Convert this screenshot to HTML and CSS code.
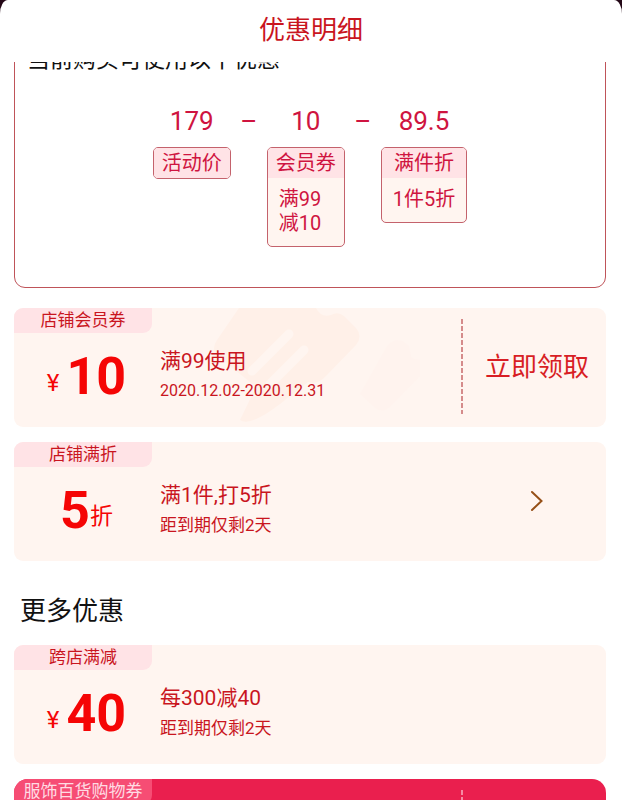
FILE: index.html
```html
<!doctype html>
<html lang="zh-CN">
  <head>
    <meta charset="utf-8">
    <meta name="viewport" content="width=device-width, initial-scale=1">
    <title>优惠明细</title>
    <link rel="stylesheet" href="styles.css">
  </head>
  <body>
    <div class="sheet">
      <header class="header"><h1>优惠明细</h1></header>
      <main class="content">
        <section class="panel">
          <h2 class="panel-title">当前购买可使用以下优惠</h2>
          <div class="formula">
            <div class="term">
              <span class="num">179</span>
              <div class="chip"><div class="chip-head">活动价</div></div>
            </div>
            <span class="minus">–</span>
            <div class="term">
              <span class="num">10</span>
              <div class="chip">
                <div class="chip-head">会员券</div>
                <div class="chip-body">满99<br>减10</div>
              </div>
            </div>
            <span class="minus">–</span>
            <div class="term">
              <span class="num">89.5</span>
              <div class="chip">
                <div class="chip-head">满件折</div>
                <div class="chip-body">1件5折</div>
              </div>
            </div>
          </div>
        </section>

        <article class="card">
          <!-- faint tickets behind the text -->
          <svg class="watermark" viewBox="0 0 230 119" aria-hidden="true">
            <path fill="#fff0e8" d="M49 0H126Q131 10 141 7Q148 3 154 8L166 20Q173 28 166 37L136 68Q128 77 118 74L90 96Q60 119 50 112L66 79L29 49Q20 42 27 32Z"/>
            <path stroke="#fff5f0" stroke-width="9" stroke-linecap="round" d="M99 26L62 63M114 42L80 76"/>
            <path fill="#fff3ee" d="M197 38Q207 26 219 38L221 49Q226 54 236 50L240 58L202 97Q192 107 184 99L170 86Z"/>
          </svg>
          <div class="tag">店铺会员券</div>
          <div class="value"><span class="unit">¥</span><b>10</b></div>
          <div class="info">
            <h3>满99使用</h3>
            <p class="date">2020.12.02-2020.12.31</p>
          </div>
          <div class="action dashed"><button type="button">立即领取</button></div>
        </article>

        <article class="card">
          <div class="tag">店铺满折</div>
          <div class="value off"><b>5</b><span class="unit">折</span></div>
          <div class="info">
            <h3>满1件,打5折</h3>
            <p>距到期仅剩2天</p>
          </div>
          <div class="action">
            <button type="button" aria-label="查看">
              <svg class="arrow" viewBox="0 0 14 22" aria-hidden="true"><path d="M2 2L11.500 11L2 20"/></svg>
            </button>
          </div>
        </article>

        <h2 class="more">更多优惠</h2>

        <article class="card">
          <div class="tag">跨店满减</div>
          <div class="value"><span class="unit">¥</span><b>40</b></div>
          <div class="info">
            <h3>每300减40</h3>
            <p>距到期仅剩2天</p>
          </div>
        </article>

        <article class="card red">
          <div class="tag">服饰百货购物券</div>
          <div class="action dashed"></div>
        </article>
      </main>
    </div>
  </body>
</html>
```
FILE: styles.css
```css
* {
  box-sizing: border-box;
}
body {
  margin: 0;
  background: #240817;
  color: #c9151e;
  font-family: Roboto, "Noto Sans CJK SC", sans-serif;
}
h1, h2, h3, p {
  margin: 0;
  font-weight: 400;
}
.sheet {
  display: flex;
  flex-direction: column;
  height: 100vh;
  background: #fff;
  border-radius: 8px 8px 0 0 / 14px 14px 0 0;
  overflow: hidden;
}
.header {
  flex: none;
  height: 62px;
  padding-top: 13px;
  text-align: center;
}
.header h1 {
  font-size: 26px;
  line-height: 34px;
}
.content {
  flex: 1;
  min-height: 0;
  padding: 0 16px 0 14px;
  overflow: hidden;
}

/* price formula */
.panel {
  margin-top: -36px;
  margin-bottom: 20px;
  padding: 18px 12px 40px;
  border: 1px solid #bf5359;
  border-radius: 11px;
}
.panel-title {
  margin-bottom: 31px;
  color: #111;
  font-size: 23px;
  line-height: 30px;
}
.formula {
  display: flex;
  justify-content: center;
  align-items: flex-start;
  color: #cf1440;
}
.term {
  display: flex;
  flex-direction: column;
  align-items: center;
  gap: 11px;
}
.num, .minus {
  font-size: 26px;
  line-height: 30px;
}
.minus {
  width: 36px;
  text-align: center;
}
.chip {
  border: 1px solid #c4626c;
  border-radius: 5px;
  background: #fff5f0;
  font-size: 20px;
  overflow: hidden;
}
.chip-head {
  padding: 0 8px;
  background: #ffe3e6;
  line-height: 30px;
  text-align: center;
}
.chip-body {
  padding: 9px 11px 11px;
  line-height: 24px;
}

/* coupons */
.card {
  position: relative;
  display: grid;
  grid-template-columns: 145px 1fr 145px;
  grid-template-rows: 25px 1fr;
  height: 119px;
  margin-bottom: 15px;
  border-radius: 9px;
  background: #fff5f0;
  overflow: hidden;
}
.tag {
  width: 138px;
  border-radius: 0 0 9px 0;
  background: #ffe3e6;
  font-size: 17px;
  line-height: 24px;
  text-align: center;
}
.value {
  display: flex;
  grid-row: 2;
  justify-content: center;
  align-items: center;
  height: 88px;
  color: #f50505;
}
.value b {
  font-size: 52px;
  line-height: 60px;
}
.unit {
  margin-right: 7px;
  padding-top: 12px;
  font-size: 24px;
  line-height: 30px;
}
.off .unit {
  margin: 0;
  font-size: 23px;
}
.info {
  position: relative;
  grid-row: 2;
  padding: 13px 0 0 1px;
  line-height: 30px;
}
.info h3 {
  font-size: 21px;
}
.info p {
  font-size: 17px;
}
.info .date {
  font-size: 16px;
}
.action {
  display: flex;
  grid-row: 1 / 3;
  grid-column: 3;
  align-items: center;
  justify-content: center;
  margin: 11px 0 13px;
  padding-left: 7px;
}
.dashed {
  background: repeating-linear-gradient(#d58b8b 0 5px, transparent 5px 7px) left / 2px 100% no-repeat;
}
.action button {
  padding: 0;
  border: 0;
  background: none;
  color: #d81e24;
  font: inherit;
  font-size: 26px;
  line-height: 38px;
}
.arrow {
  display: block;
  width: 14px;
  height: 22px;
  fill: none;
  stroke: #965018;
  stroke-width: 2;
  stroke-linecap: round;
}
.watermark {
  position: absolute;
  top: 0;
  left: 176px;
  width: 230px;
  height: 119px;
}
.more {
  margin: 34px 0 18px;
  padding-left: 6px;
  color: #111;
  font-size: 26px;
  line-height: 32px;
}
.red {
  border-radius: 14px;
  background: #ea1f4e;
  color: #ffdbe3;
}
.red .tag {
  background: #f64d74;
}
.red .dashed {
  background: repeating-linear-gradient(#f58aa3 0 5px, transparent 5px 7px) left / 2px 100% no-repeat;
}
```
